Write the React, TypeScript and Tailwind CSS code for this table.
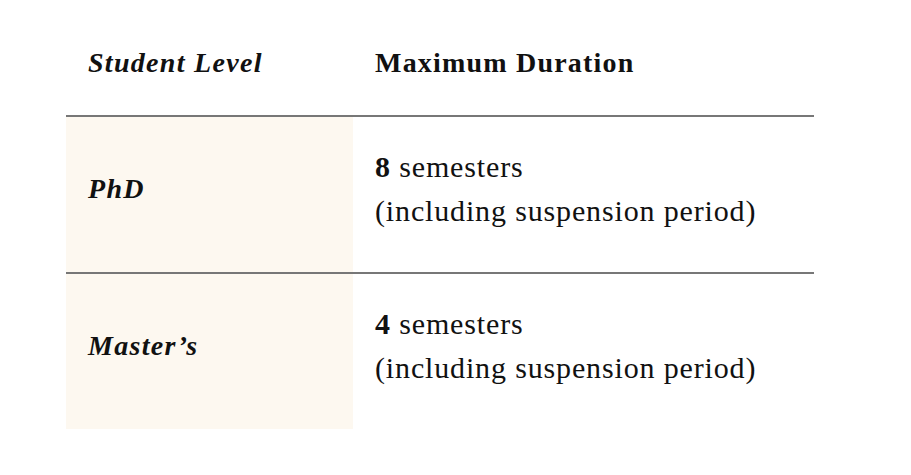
import React from "react";

const rows = [
  { level: "PhD", n: "8" },
  { level: "Master\u2019s", n: "4" },
];

export default function App() {
  return (
    <div
      className="w-[911px] h-[475px] bg-white text-[#111]"
      style={{ fontFamily: '"Liberation Serif", "Times New Roman", serif' }}
    >
      <div className="ml-[66px] w-[748px]">
        <div className="flex h-[115px] items-center pt-[10px]">
          <div className="w-[287px] pl-[22px] text-[28px] font-bold italic tracking-[1.3px]">Student Level</div>
          <div className="pl-[22px] text-[28px] font-bold tracking-[1.2px]">Maximum Duration</div>
        </div>
        {rows.map((r) => (
          <div key={r.level} className="flex border-t-2 border-[#777]">
            <div className="flex h-[155px] w-[287px] items-center bg-[#fdf8f0] pb-[12px] pl-[22px] text-[28px] font-bold italic tracking-[1.3px]">
              {r.level}
            </div>
            <div className="flex flex-col justify-center pb-[12px] pl-[22px] text-[30px] leading-[44px] tracking-[0.85px]">
              <div>
                <span className="font-bold">{r.n}</span> semesters
              </div>
              <div>(including suspension period)</div>
            </div>
          </div>
        ))}
      </div>
    </div>
  );
}
